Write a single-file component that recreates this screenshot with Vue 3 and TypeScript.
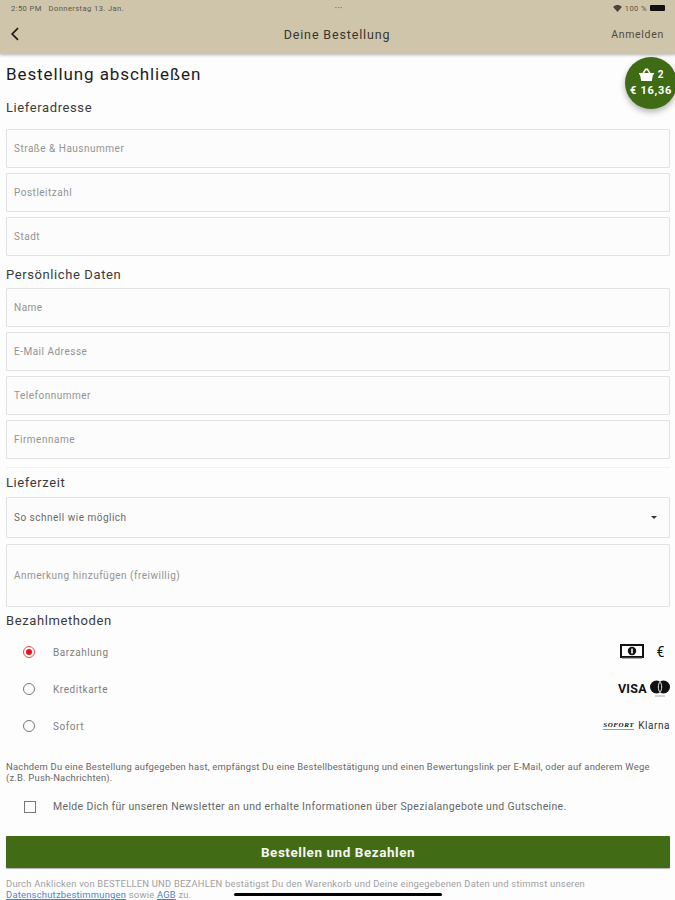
<script setup lang="ts">
const addressFields = ['Straße & Hausnummer', 'Postleitzahl', 'Stadt']
const personalFields = ['Name', 'E-Mail Adresse', 'Telefonnummer', 'Firmenname']
const methods = [
  { name: 'Barzahlung', icon: 'cash', active: true },
  { name: 'Kreditkarte', icon: 'card', active: false },
  { name: 'Sofort', icon: 'sofort', active: false }
]
</script>

<template>
  <div class="page">
    <header class="topbar">
      <div class="status">
        <span class="status-left">2:50 PM &nbsp; Donnerstag 13. Jan.</span>
        <span class="dots">•••</span>
        <span class="status-right">
          <svg width="9" height="7" viewBox="0 0 10 8"><path d="M0 2.2 C3 -0.6 7 -0.6 10 2.2 L5 8 Z" fill="#4a4538" /></svg>
          <span>100 %</span>
          <span class="battery"></span>
        </span>
      </div>
      <div class="nav">
        <svg class="back" width="10" height="14" viewBox="0 0 10 14"><path d="M8 1.2 L2.2 7 L8 12.8" fill="none" stroke="#1d1b16" stroke-width="1.7" /></svg>
        <span class="nav-title">Deine Bestellung</span>
        <span class="nav-login">Anmelden</span>
      </div>
    </header>

    <div class="basket">
      <div class="basket-top">
        <svg width="15" height="13" viewBox="0 0 15 13"><path d="M0 5 H3.4 L6.2 0.6 H8.8 L11.6 5 H15 V6.6 H14 L12.8 13 H2.2 L1 6.6 H0 Z M5.2 5 H9.8 L8 2.2 H7 Z" fill="#fff" fill-rule="evenodd" /></svg>
        <span>2</span>
      </div>
      <div class="basket-price">€ 16,36</div>
    </div>

    <main class="content">
      <h1>Bestellung abschließen</h1>

      <h2 class="first">Lieferadresse</h2>
      <div class="fields">
        <div v-for="f in addressFields" :key="f" class="field">{{ f }}</div>
      </div>

      <h2 class="personal">Persönliche Daten</h2>
      <div class="fields">
        <div v-for="f in personalFields" :key="f" class="field">{{ f }}</div>
      </div>

      <div class="divider"></div>

      <h2 class="delivery">Lieferzeit</h2>
      <div class="field select">
        <span class="select-text">So schnell wie möglich</span>
        <span class="caret"></span>
      </div>
      <div class="field note">Anmerkung hinzufügen (freiwillig)</div>

      <h2 class="payment">Bezahlmethoden</h2>
      <div class="methods">
        <div v-for="m in methods" :key="m.name" class="method">
          <span class="radio" :class="{ on: m.active }"></span>
          <span class="method-name">{{ m.name }}</span>
          <span v-if="m.icon === 'cash'" class="logos">
            <svg width="24" height="15" viewBox="0 0 24 15">
              <rect x="1" y="1" width="22" height="12" fill="#fff" stroke="#111" stroke-width="2" />
              <circle cx="12" cy="7" r="4.2" fill="#111" />
              <rect x="11.2" y="4.5" width="1.6" height="5" fill="#fff" />
              <rect x="2" y="13.6" width="20" height="1" fill="#777" />
            </svg>
            <span class="euro">€</span>
          </span>
          <span v-else-if="m.icon === 'card'" class="logos card">
            <span class="visa">VISA</span>
            <svg width="20" height="18" viewBox="0 0 20 18">
              <circle cx="6.5" cy="7" r="6.5" fill="#111" />
              <circle cx="13.5" cy="7" r="6.5" fill="#111" />
              <path d="M10 1.6 C12.2 4.4 12.2 9.6 10 12.4 C7.8 9.6 7.8 4.4 10 1.6 Z" fill="#111" stroke="#fff" stroke-width="0.9" />
              <rect x="5" y="15.5" width="10" height="1" fill="#aaa" />
            </svg>
          </span>
          <span v-else class="logos sofort-logos">
            <span class="sofort">SOFORT</span>
            <span class="klarna">Klarna</span>
          </span>
        </div>
      </div>

      <p class="info">Nachdem Du eine Bestellung aufgegeben hast, empfängst Du eine Bestellbestätigung und einen Bewertungslink per E-Mail, oder auf anderem Wege (z.B. Push-Nachrichten).</p>

      <div class="newsletter">
        <span class="check"></span>
        <span>Melde Dich für unseren Newsletter an und erhalte Informationen über Spezialangebote und Gutscheine.</span>
      </div>

      <button class="submit">Bestellen und Bezahlen</button>

      <p class="legal">Durch Anklicken von BESTELLEN UND BEZAHLEN bestätigst Du den Warenkorb und Deine eingegebenen Daten und stimmst unseren <a>Datenschutzbestimmungen</a> sowie <a>AGB</a> zu.</p>
    </main>

    <div class="home-bar"></div>
  </div>
</template>

<style>
html, body {
  margin: 0;
  background: #fdfdfd;
}
</style>

<style scoped>
.page {
  position: relative;
  width: 675px;
  height: 900px;
  overflow: hidden;
  background: #fdfdfd;
  font-family: Roboto, "Liberation Sans", sans-serif;
  color: #333;
}

.topbar {
  height: 54px;
  background: #cfc5ab;
  box-shadow: 0 1px 3px rgba(0, 0, 0, 0.3);
  position: relative;
  z-index: 1;
}

.status {
  height: 16px;
  display: grid;
  grid-template-columns: 1fr auto 1fr;
  align-items: center;
  padding: 0 8px 0 11px;
  font-size: 7.6px;
  letter-spacing: 0.4px;
  color: #5c5747;
}

.dots {
  font-size: 5px;
  letter-spacing: 1px;
}

.status-right {
  display: flex;
  align-items: center;
  justify-content: flex-end;
  gap: 3px;
  padding-right: 2px;
}

.battery {
  width: 15px;
  height: 6px;
  background: #111;
  border-radius: 1px;
}

.nav {
  height: 36px;
  display: grid;
  grid-template-columns: 1fr auto 1fr;
  align-items: center;
  padding: 0 11px 0 10px;
}

.back {
  display: block;
}

.nav-title {
  font-size: 12.5px;
  font-weight: 400;
  letter-spacing: 0.85px;
  color: #38352c;
}

.nav-login {
  justify-self: end;
  font-size: 10.5px;
  letter-spacing: 0.7px;
  color: #4f4b3f;
}

.basket {
  position: absolute;
  top: 57px;
  right: -2px;
  width: 52px;
  height: 52px;
  border-radius: 50%;
  background: #3f6b14;
  box-shadow: 0 3px 6px rgba(0, 0, 0, 0.3);
  z-index: 2;
  color: #fff;
  font-weight: 700;
  font-size: 11px;
  display: flex;
  flex-direction: column;
  align-items: center;
  justify-content: center;
  gap: 3px;
  padding-bottom: 1px;
  box-sizing: border-box;
}

.basket-top {
  display: flex;
  align-items: center;
  gap: 4px;
  font-size: 10px;
}

.basket-price {
  font-size: 11px;
  letter-spacing: 0.7px;
  white-space: nowrap;
}

.content {
  padding: 0 5px 0 6px;
}

h1 {
  margin: 10px 0 0;
  font-size: 17px;
  line-height: 20px;
  font-weight: 400;
  letter-spacing: 0.9px;
  color: #1c1c1c;
}

h2 {
  margin: 0;
  font-size: 13px;
  line-height: 16px;
  font-weight: 400;
  letter-spacing: 0.6px;
  color: #3a3a3a;
}

h2.first {
  margin-top: 16px;
  margin-bottom: 13px;
}

h2.personal {
  margin-top: 11px;
  margin-bottom: 5px;
}

h2.delivery {
  margin-top: 7px;
  margin-bottom: 6px;
}

h2.payment {
  margin-top: 6px;
  margin-bottom: 4px;
}

.fields {
  display: flex;
  flex-direction: column;
  gap: 5px;
}

.field {
  box-sizing: border-box;
  height: 39px;
  display: flex;
  align-items: center;
  padding: 0 7px;
  border: 1.5px solid #e2e2e2;
  border-radius: 1px;
  background: #fcfcfc;
  font-size: 10px;
  letter-spacing: 0.5px;
  color: #939393;
}

.divider {
  margin-top: 8px;
  height: 1px;
  background: #f1f1f1;
}

.select {
  height: 41px;
  justify-content: space-between;
  padding-right: 12px;
}

.select-text {
  color: #6a6a6a;
}

.caret {
  width: 0;
  height: 0;
  border-left: 3px solid transparent;
  border-right: 3px solid transparent;
  border-top: 3px solid #333;
}

.note {
  margin-top: 6px;
  height: 63px;
}

.methods {
  display: flex;
  flex-direction: column;
}

.method {
  height: 37px;
  display: flex;
  align-items: center;
  padding-left: 17px;
  font-size: 10px;
  letter-spacing: 0.55px;
  color: #808080;
}

.radio {
  box-sizing: border-box;
  width: 12px;
  height: 12px;
  border: 1.3px solid #777;
  border-radius: 50%;
  margin-right: 18px;
  display: flex;
  align-items: center;
  justify-content: center;
}

.radio.on {
  border-color: #f24a4a;
}

.radio.on::after {
  content: "";
  width: 6px;
  height: 6px;
  border-radius: 50%;
  background: #e8101a;
}

.method-name {
  flex: 1;
  margin-top: 2px;
}

.logos {
  display: flex;
  align-items: center;
  color: #111;
}

.euro {
  margin: 0 5px 0 13px;
  font-size: 14px;
  font-weight: 400;
}

.card {
  gap: 3px;
}

.visa {
  font-size: 12.5px;
  font-weight: 700;
  letter-spacing: 0.3px;
}

.sofort-logos {
  gap: 4px;
}

.sofort {
  font-size: 7px;
  font-weight: 900;
  font-style: italic;
  font-family: "Liberation Serif", serif;
  border-bottom: 1px solid #999;
  line-height: 8px;
}

.klarna {
  font-size: 10px;
  color: #333;
}

.info {
  margin: 17px 0 0;
  font-size: 9.4px;
  line-height: 11px;
  letter-spacing: 0.23px;
  color: #666;
}

.newsletter {
  margin-top: 17px;
  display: flex;
  align-items: center;
  padding-left: 18px;
  font-size: 10.5px;
  letter-spacing: 0.34px;
  color: #666;
}

.check {
  box-sizing: border-box;
  width: 12px;
  height: 12px;
  border: 1.5px solid #777;
  margin-right: 17px;
}

.submit {
  display: block;
  width: 100%;
  height: 32px;
  margin-top: 23px;
  padding: 0;
  border: none;
  border-radius: 1px;
  background: #426b16;
  box-shadow: 0 1px 1px rgba(0, 0, 0, 0.3);
  font-family: inherit;
  font-size: 13.5px;
  font-weight: 700;
  letter-spacing: 0.55px;
  color: #f6f6f0;
}

.legal {
  margin: 11px 0 0;
  font-size: 9.4px;
  line-height: 10.8px;
  letter-spacing: 0.23px;
  color: #a0a0a0;
}

.legal a {
  color: #4a86c5;
  text-decoration: underline;
}

.home-bar {
  position: absolute;
  left: 234px;
  top: 893px;
  width: 208px;
  height: 3px;
  border-radius: 2px;
  background: #000;
}
</style>
